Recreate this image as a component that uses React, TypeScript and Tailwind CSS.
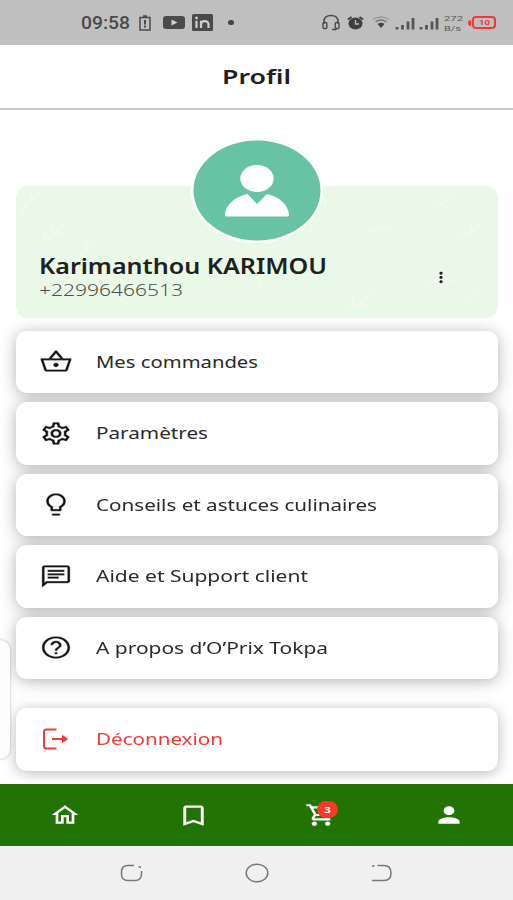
import type { ReactNode } from "react";
import type { IconType } from "react-icons";
import {
  MdBookmarkBorder,
  MdHelpOutline,
  MdLightbulbOutline,
  MdMoreVert,
  MdOutlineChat,
  MdOutlineHome,
  MdOutlineSettings,
  MdOutlineShoppingBasket,
  MdOutlineShoppingCart,
  MdPerson,
} from "react-icons/md";

interface WideTextProps {
  children: ReactNode;
  width: number;
  size: number;
  height?: number;
  className?: string;
}

// One line of text fitted to a fixed width
const WideText = ({
  children,
  width,
  size,
  height = 24,
  className = "",
}: WideTextProps) => (
  <svg
    width={width}
    height={height}
    className={`shrink-0 overflow-visible fill-current ${className}`}
  >
    <text
      x="0"
      y={height * 0.76}
      fontSize={size}
      textLength={width}
      lengthAdjust="spacingAndGlyphs"
    >
      {children}
    </text>
  </svg>
);

const Signal = () => (
  <svg viewBox="0 0 20 14" className="h-[14px] w-5 text-[#555]">
    <path
      d="M2 11v2.500M7.500 9v4.500M13 5.500v8M18 2v11.500"
      stroke="currentColor"
      strokeWidth="2.800"
    />
  </svg>
);

const StatusBar = () => (
  <div className="flex h-[45px] items-center bg-[#bfbfbf] pl-[81px] font-['Roboto',sans-serif] text-[#4a4a4a]">
    <WideText width={49} size={17.5} className="font-medium">
      09:58
    </WideText>
    <svg viewBox="0 0 12 16" className="ml-[9px] h-4 w-3" fill="none">
      <path
        d="M1 2.500h10v12.500H1zM4 1h4"
        stroke="currentColor"
        strokeWidth="1.500"
      />
      <path d="M6 5v4.500M6 10.500v2" stroke="currentColor" strokeWidth="2" />
    </svg>
    <svg viewBox="0 0 22 13" className="ml-3 h-[13px] w-[22px]">
      <rect width="22" height="13" rx="3" fill="currentColor" />
      <path d="M8.500 3.500l6 3-6 3z" fill="#d0d0d0" />
    </svg>
    <svg viewBox="0 0 21 17" className="ml-[7px] h-[17px] w-[21px]">
      <rect width="21" height="17" rx="1.500" fill="currentColor" />
      <path
        d="M4.500 6.800V14M9 14V6.800M9 10c0-3.600 7.500-4 7.500.3V14"
        fill="none"
        stroke="#cfcfcf"
        strokeWidth="2.200"
      />
      <circle cx="4.500" cy="4" r="1.400" fill="#cfcfcf" />
    </svg>
    <span className="ml-[15px] h-[5px] w-[6px] rounded-full bg-[#444]" />

    <svg viewBox="0 0 18 17" className="ml-[88px] h-[17px] w-[18px]" fill="none">
      <path
        d="M2 10V7.500C2 3.500 5 1.500 9 1.500s7 2 7 6V10M14.500 15.500H10"
        stroke="currentColor"
        strokeWidth="1.500"
      />
      <rect x="1" y="8.500" width="3.800" height="6" rx="1" stroke="currentColor" strokeWidth="1.400" />
      <rect x="13.200" y="8.500" width="3.800" height="6" rx="1" stroke="currentColor" strokeWidth="1.400" />
    </svg>
    <svg viewBox="0 0 17 14" className="ml-[7px] h-[14px] w-[17px]" fill="none">
      <ellipse cx="8.500" cy="7.500" rx="7" ry="6" fill="#3f3f3f" />
      <path d="M1 3.500L4.500 1M16 3.500L12.500 1" stroke="#3f3f3f" strokeWidth="2" />
      <path d="M8.500 4v4h3.500" stroke="#bfbfbf" strokeWidth="1.300" />
    </svg>
    <svg viewBox="0 0 18 13" className="ml-[8px] h-[13px] w-[18px]" fill="none">
      <path d="M1 3.500Q9-1.500 17 3.500" stroke="#999" strokeWidth="1.400" />
      <path d="M3.500 6Q9 2 14.500 6" stroke="#777" strokeWidth="1.500" />
      <path d="M5.500 8Q9 5.500 12.500 8L9 12z" fill="#444" />
    </svg>
    <div className="ml-[5px] flex gap-[4px]">
      <Signal />
      <Signal />
    </div>
    <div className="ml-[5px] flex flex-col text-[#5a5a5a]">
      <WideText width={19} size={8} height={10}>
        272
      </WideText>
      <WideText width={17} size={8} height={10}>
        B/s
      </WideText>
    </div>
    <div className="ml-[5px] flex items-center text-[#f03a3a]">
      <span className="mr-[1px] h-[6px] w-[3px] rounded-l bg-[#f03a3a]" />
      <div className="flex h-[13px] w-[24px] items-center justify-center rounded-[4px] border-2 border-[#f03a3a]">
        <WideText width={11} size={8} height={8} className="mt-px font-bold">
          10
        </WideText>
      </div>
    </div>
  </div>
);

const Leaves = () => (
  <svg
    viewBox="0 0 482 132"
    className="absolute inset-0 size-full"
    fill="none"
    stroke="#fff"
    strokeOpacity="0.28"
    strokeWidth="1.800"
  >
    <path d="M4 34Q8 12 30 4M12 22l-8-4M18 14l-4-8M20 56q18-3 28-18M30 53l-2-8M38 47l-2-7M38 50l10-2" />
    <path d="M410 22q18 0 28-16M420 19l-3-7M430 12l-2-7M438 50q14 2 26-12M446 50l-1-9M455 46v-8" />
    <path d="M330 122q18-2 26-18M338 119l-2-8M348 113l-2-8M344 118l10 1M408 104q14-16 34-8M60 84q4-22 22-28M66 72l-7-5M72 63l-4-8" />
    <path d="M240 106q8-16 24-20M246 98l-5-6M254 90l-3-6M350 48q12-10 30-4M100 120q10-14 28-12M450 124q4-18 26-26" />
  </svg>
);

const ProfileCard = () => (
  <section className="relative ml-4 mr-[15px] mt-[76px] flex h-[132px] justify-between rounded-xl bg-[#eaf8e7] pl-[23px] pt-[67px]">
    <Leaves />
    <svg
      viewBox="0 0 134 106"
      className="absolute left-[174px] top-[-49px] h-[106px] w-[134px]"
    >
      <ellipse cx="67" cy="53" rx="66.500" ry="53" fill="#fff" />
      <ellipse cx="67" cy="53.500" rx="63.500" ry="50" fill="#67c3a3" />
      <ellipse cx="67" cy="41.500" rx="16.700" ry="13.500" fill="#fff" />
      <path
        d="M36.500 79.500q-1.700 0-1.500-2C35.500 68 45 59.500 57.500 57L67 67l10-10c12 2.500 21.500 11 22 20.500q.2 2-1.500 2z"
        fill="#fff"
      />
    </svg>
    <div className="relative flex flex-col">
      <WideText width={288} size={21} height={27} className="font-semibold text-[#202020]">
        Karimanthou KARIMOU
      </WideText>
      <WideText width={144} size={17} height={21} className="font-light text-[#4a504a]">
        +22996466513
      </WideText>
    </div>
    <MdMoreVert
      preserveAspectRatio="none"
      className="relative mr-[47px] mt-[16px] h-[17px] w-[20px] text-[#222]"
    />
  </section>
);

const LogoutIcon = () => (
  <svg
    viewBox="0 0 28 22"
    className="h-[22px] w-[28px]"
    fill="none"
    stroke="currentColor"
    strokeWidth="2"
  >
    <path d="M14.500 1.500H4.500Q2 1.500 2 3.500v15q0 2 2.500 2h10" />
    <path d="M10 11h12" />
    <path d="M20.500 7.500l5 3.500-5 3.500z" fill="currentColor" strokeWidth="1" />
  </svg>
);

interface MenuItemProps {
  label: string;
  width: number;
  icon?: IconType;
}

const MenuItem = ({ label, width, icon: Icon }: MenuItemProps) => (
  <li
    className={`flex h-[62.500px] items-center rounded-[11px] bg-white pl-[23px] ${
      Icon ? "text-[#2a2a2a]" : "text-[#f43a34]"
    }`}
  >
    <div className="flex w-[34px] justify-center">
      {Icon ? (
        <Icon
          preserveAspectRatio="none"
          className="h-[27px] w-[34px] stroke-white stroke-[0.3px] text-[#111]"
        />
      ) : (
        <LogoutIcon />
      )}
    </div>
    <WideText width={width} size={16.5} className="ml-[23px]">
      {label}
    </WideText>
  </li>
);

const menu: MenuItemProps[] = [
  { label: "Mes commandes", width: 162, icon: MdOutlineShoppingBasket },
  { label: "Paramètres", width: 112, icon: MdOutlineSettings },
  { label: "Conseils et astuces culinaires", width: 281, icon: MdLightbulbOutline },
  { label: "Aide et Support client", width: 212, icon: MdOutlineChat },
  { label: "A propos d’O’Prix Tokpa", width: 232, icon: MdHelpOutline },
];

const tabs: IconType[] = [
  MdOutlineHome,
  MdBookmarkBorder,
  MdOutlineShoppingCart,
  MdPerson,
];

const TabBar = () => (
  <nav className="relative grid h-[62px] grid-cols-4 bg-[#217403] pl-px text-white">
    {tabs.map((Icon, index) => (
      <div key={index} className="flex items-center justify-center">
        <div className="relative">
          <Icon
            preserveAspectRatio="none"
            className={index === 1 ? "h-[27px] w-[35px]" : "h-[26px] w-[32px]"}
          />
          {index === 2 && (
            <span className="absolute left-[12px] top-[-1px] flex h-[17px] w-[21px] items-center justify-center rounded-full bg-[#f6392b]">
              <WideText width={7} size={9} height={9} className="mt-px font-bold">
                3
              </WideText>
            </span>
          )}
        </div>
      </div>
    ))}
  </nav>
);

const SystemBar = () => (
  <div className="flex h-[54px] items-center justify-between bg-[#f0f0f0] px-[120px]">
    <svg viewBox="0 0 24 18" className="h-[18px] w-6" fill="none" stroke="#777" strokeWidth="1.500">
      <path d="M14 1.500H8Q1.500 1.500 1.500 8v2q0 6.500 6.500 6.500h7q6.500 0 6.500-6.500V7M18.500 3h2.500" />
    </svg>
    <svg viewBox="0 0 24 20" className="h-5 w-6" fill="none" stroke="#777" strokeWidth="1.500">
      <ellipse cx="12" cy="10" rx="10.800" ry="8.800" />
    </svg>
    <svg viewBox="0 0 24 18" className="h-[18px] w-6" fill="none" stroke="#777" strokeWidth="1.500">
      <path d="M8.500 1.500H15q7 0 7 7.500t-7 7.500H3M3 2h2.500" />
    </svg>
  </div>
);

export default function App() {
  return (
    <div className="relative flex h-[900px] w-[513px] flex-col overflow-hidden bg-white font-['Noto_Sans','Open_Sans',sans-serif]">
      <StatusBar />
      <header className="flex h-[65px] items-center justify-center border-b-2 border-[#c9c9c9]">
        <WideText width={69} size={20} className="mt-0.5 font-semibold text-[#202020]">
          Profil
        </WideText>
      </header>
      <main className="h-[674px]">
        <ProfileCard />
        <ul className="ml-4 mr-[15px] mt-[12.500px] flex flex-col gap-[9px] drop-shadow-[0_2px_8px_rgba(0,0,0,0.3)]">
          {menu.map((item) => (
            <MenuItem {...item} key={item.label} />
          ))}
        </ul>
        <ul className="ml-4 mr-[15px] mt-[29px] drop-shadow-[0_2px_7px_rgba(0,0,0,0.28)]">
          <MenuItem label="Déconnexion" width={127} />
        </ul>
      </main>
      {/* edge panel handle */}
      <div className="absolute left-[-10px] top-[640px] h-[119px] w-5 rounded-[10px] bg-[#fdfdfd] shadow-[0_0_3px_rgba(0,0,0,0.3)]" />
      <TabBar />
      <SystemBar />
    </div>
  );
}
